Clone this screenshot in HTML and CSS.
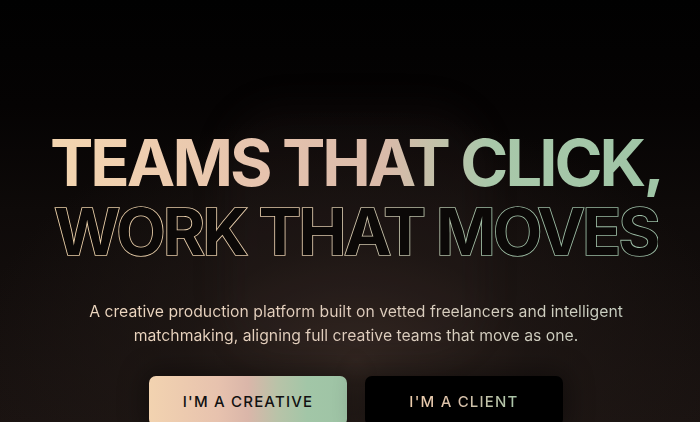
FILE: index.html
```html
<!DOCTYPE html>
<html lang="en">
<head>
<meta charset="utf-8">
<title>Teams that click</title>
<link rel="stylesheet" href="styles.css">
</head>
<body>
<main class="hero">
  <div class="glow"></div>
  <h1 class="title">
    <span class="line solid">TEAMS THAT CLICK,</span>
    <span class="line outline">WORK THAT MOVES</span>
  </h1>
  <p class="lead">A creative production platform built on vetted freelancers and intelligent matchmaking, aligning full creative teams that move as one.</p>
  <div class="actions">
    <a class="btn btn-creative" href="#">I'M A CREATIVE</a>
    <a class="btn btn-client" href="#"><span class="grad-text">I'M A CLIENT</span></a>
  </div>
</main>
</body>
</html>
```

FILE: styles.css
```css
* { box-sizing: border-box; }
html, body { margin: 0; padding: 0; }
body {
  width: 700px;
  height: 422px;
  overflow: hidden;
  background: #000;
  font-family: Inter, "Noto Sans", sans-serif;
}
.hero {
  position: relative;
  width: 700px;
  height: 422px;
  overflow: hidden;
  display: flex;
  flex-direction: column;
  align-items: center;
  padding-top: 128px;
  padding-left: 12px;
  background:
    radial-gradient(ellipse 380px 250px at 356px 360px, rgba(56,43,37,0.8) 0%, rgba(34,26,23,0.6) 45%, rgba(0,0,0,0) 100%),
    linear-gradient(180deg, #010101 0%, #050303 25%, #0e0a09 50%, #1a1311 100%);
}
.glow {
  position: absolute;
  left: 225px;
  top: 105px;
  width: 260px;
  height: 250px;
  border-radius: 60px;
  background: rgba(60,45,40,0.12);
  filter: blur(16px);
  pointer-events: none;
}
.title {
  position: relative;
  margin: 0;
  display: flex;
  flex-direction: column;
  align-items: center;
  font-weight: 700;
  font-size: 65px;
  line-height: 69px;
  letter-spacing: -3px;
}
.line {
  display: block;
  white-space: nowrap;
  background: linear-gradient(90deg, #f4d6b0 0%, #e6c3ae 35%, #d9baa9 55%, #a9c8aa 72%, #9fc5a6 100%);
  -webkit-background-clip: text;
  background-clip: text;
  color: transparent;
}
.outline {
  font-size: 64px;
  font-weight: 700;
  letter-spacing: -2.6px;
  -webkit-text-fill-color: #0b0807;
  -webkit-text-stroke: 1.7px transparent;
  background: linear-gradient(90deg, #f4d8ae 0%, #ead0b0 40%, #cbc6ae 55%, #a3c4aa 72%, #9ec0a8 100%);
  -webkit-background-clip: text;
  background-clip: text;
}
.lead {
  position: relative;
  margin: 34px 0 0;
  width: 560px;
  text-align: center;
  font-size: 15.75px;
  line-height: 24px;
  font-weight: 400;
  background: linear-gradient(90deg, #efd8c0 0%, #e0cdbd 50%, #c8d0c2 100%);
  -webkit-background-clip: text;
  background-clip: text;
  color: transparent;
}
.actions {
  position: relative;
  margin-top: 28px;
  display: flex;
  gap: 18px;
}
.btn {
  display: flex;
  align-items: center;
  justify-content: center;
  width: 198px;
  height: 50px;
  border-radius: 7px;
  text-decoration: none;
  font-size: 15px;
  font-weight: 500;
  letter-spacing: 1.2px;
  box-shadow: 0 0 24px 6px rgba(0,0,0,0.35);
}
.btn-creative {
  background: linear-gradient(90deg, #f2d3b0 0%, #e7c2ae 35%, #dab6a9 50%, #b8c3a8 65%, #a2c6a7 80%, #9ec3a5 100%);
  color: #111;
}
.btn-client {
  background: #000;
}
.grad-text {
  background: linear-gradient(90deg, #efcfae 0%, #d9bfa9 45%, #a8c6a9 100%);
  -webkit-background-clip: text;
  background-clip: text;
  color: transparent;
}
```
